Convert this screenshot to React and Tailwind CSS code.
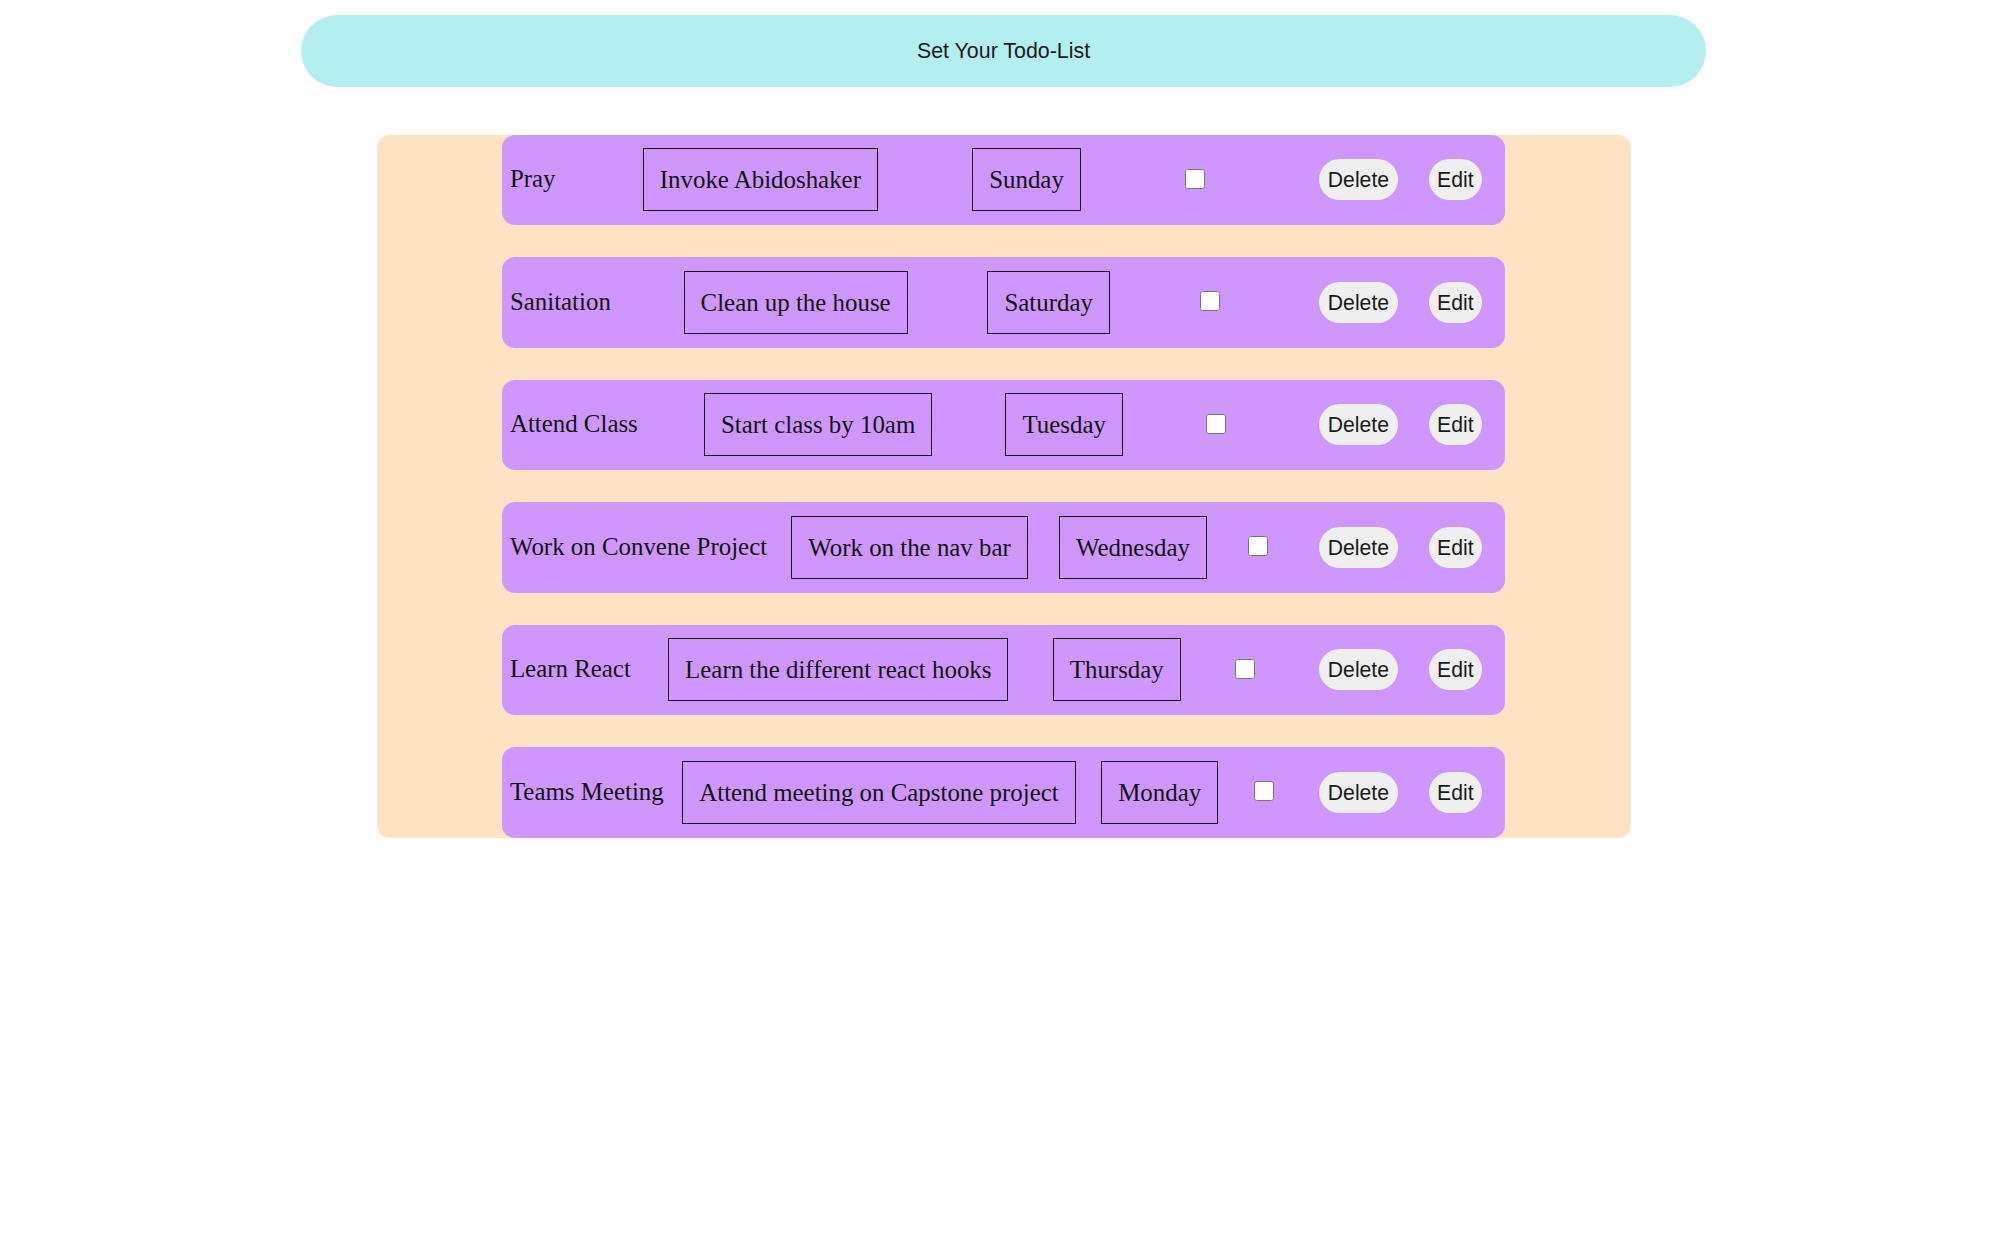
import React from 'react';

const todos = [
  { title: 'Pray', description: 'Invoke Abidoshaker', day: 'Sunday' },
  { title: 'Sanitation', description: 'Clean up the house', day: 'Saturday' },
  { title: 'Attend Class', description: 'Start class by 10am', day: 'Tuesday' },
  { title: 'Work on Convene Project', description: 'Work on the nav bar', day: 'Wednesday' },
  { title: 'Learn React', description: 'Learn the different react hooks', day: 'Thursday' },
  { title: 'Teams Meeting', description: 'Attend meeting on Capstone project', day: 'Monday' },
];

function TodoItem({ todo }) {
  return (
    <div className="flex w-[80%] h-[90.5px] shrink-0 items-center justify-between rounded-[13px] bg-[#cf97fd] pl-[8px] pr-[23px] font-['Liberation_Serif',serif] text-[24.9px] text-[#111]">
      <span className="mr-[18px] shrink-0 whitespace-nowrap leading-none">{todo.title}</span>
      <p className="mr-[25px] flex h-[63px] shrink-0 items-center whitespace-nowrap border-[1.8px] border-[#161616] px-[16px]">
        {todo.description}
      </p>
      <p className="mr-[35px] flex h-[63px] shrink-0 items-center whitespace-nowrap border-[1.8px] border-[#161616] px-[16px]">
        {todo.day}
      </p>
      <input type="checkbox" className="mr-[45px] mb-[2px] h-[20px] w-[20px] shrink-0" />
      <div className="flex shrink-0 items-center gap-[31px] font-['Liberation_Sans',Arial,sans-serif] text-[21.2px] text-[#1a1a1a]">
        <button className="h-[41px] rounded-full bg-[#efefef] px-[8.5px] leading-none">Delete</button>
        <button className="h-[41px] rounded-full bg-[#efefef] px-[8.5px] leading-none">Edit</button>
      </div>
    </div>
  );
}

export default function App() {
  return (
    <div className="min-h-screen bg-white pt-[15px]">
      <header className="mx-auto flex h-[72px] w-[70%] items-center justify-center rounded-full bg-[#b3eff0] font-['Liberation_Sans',Arial,sans-serif] text-[21.4px] text-[#1a1a1a]">
        Set Your Todo-List
      </header>

      {/* Todo list */}
      <div className="mx-auto mt-[47.5px] flex w-[1254px] flex-col items-center gap-[32px] rounded-[13px] bg-[#fde2c3]">
        {todos.map((todo, idx) => (
          <TodoItem key={idx} todo={todo} />
        ))}
      </div>
    </div>
  );
}
